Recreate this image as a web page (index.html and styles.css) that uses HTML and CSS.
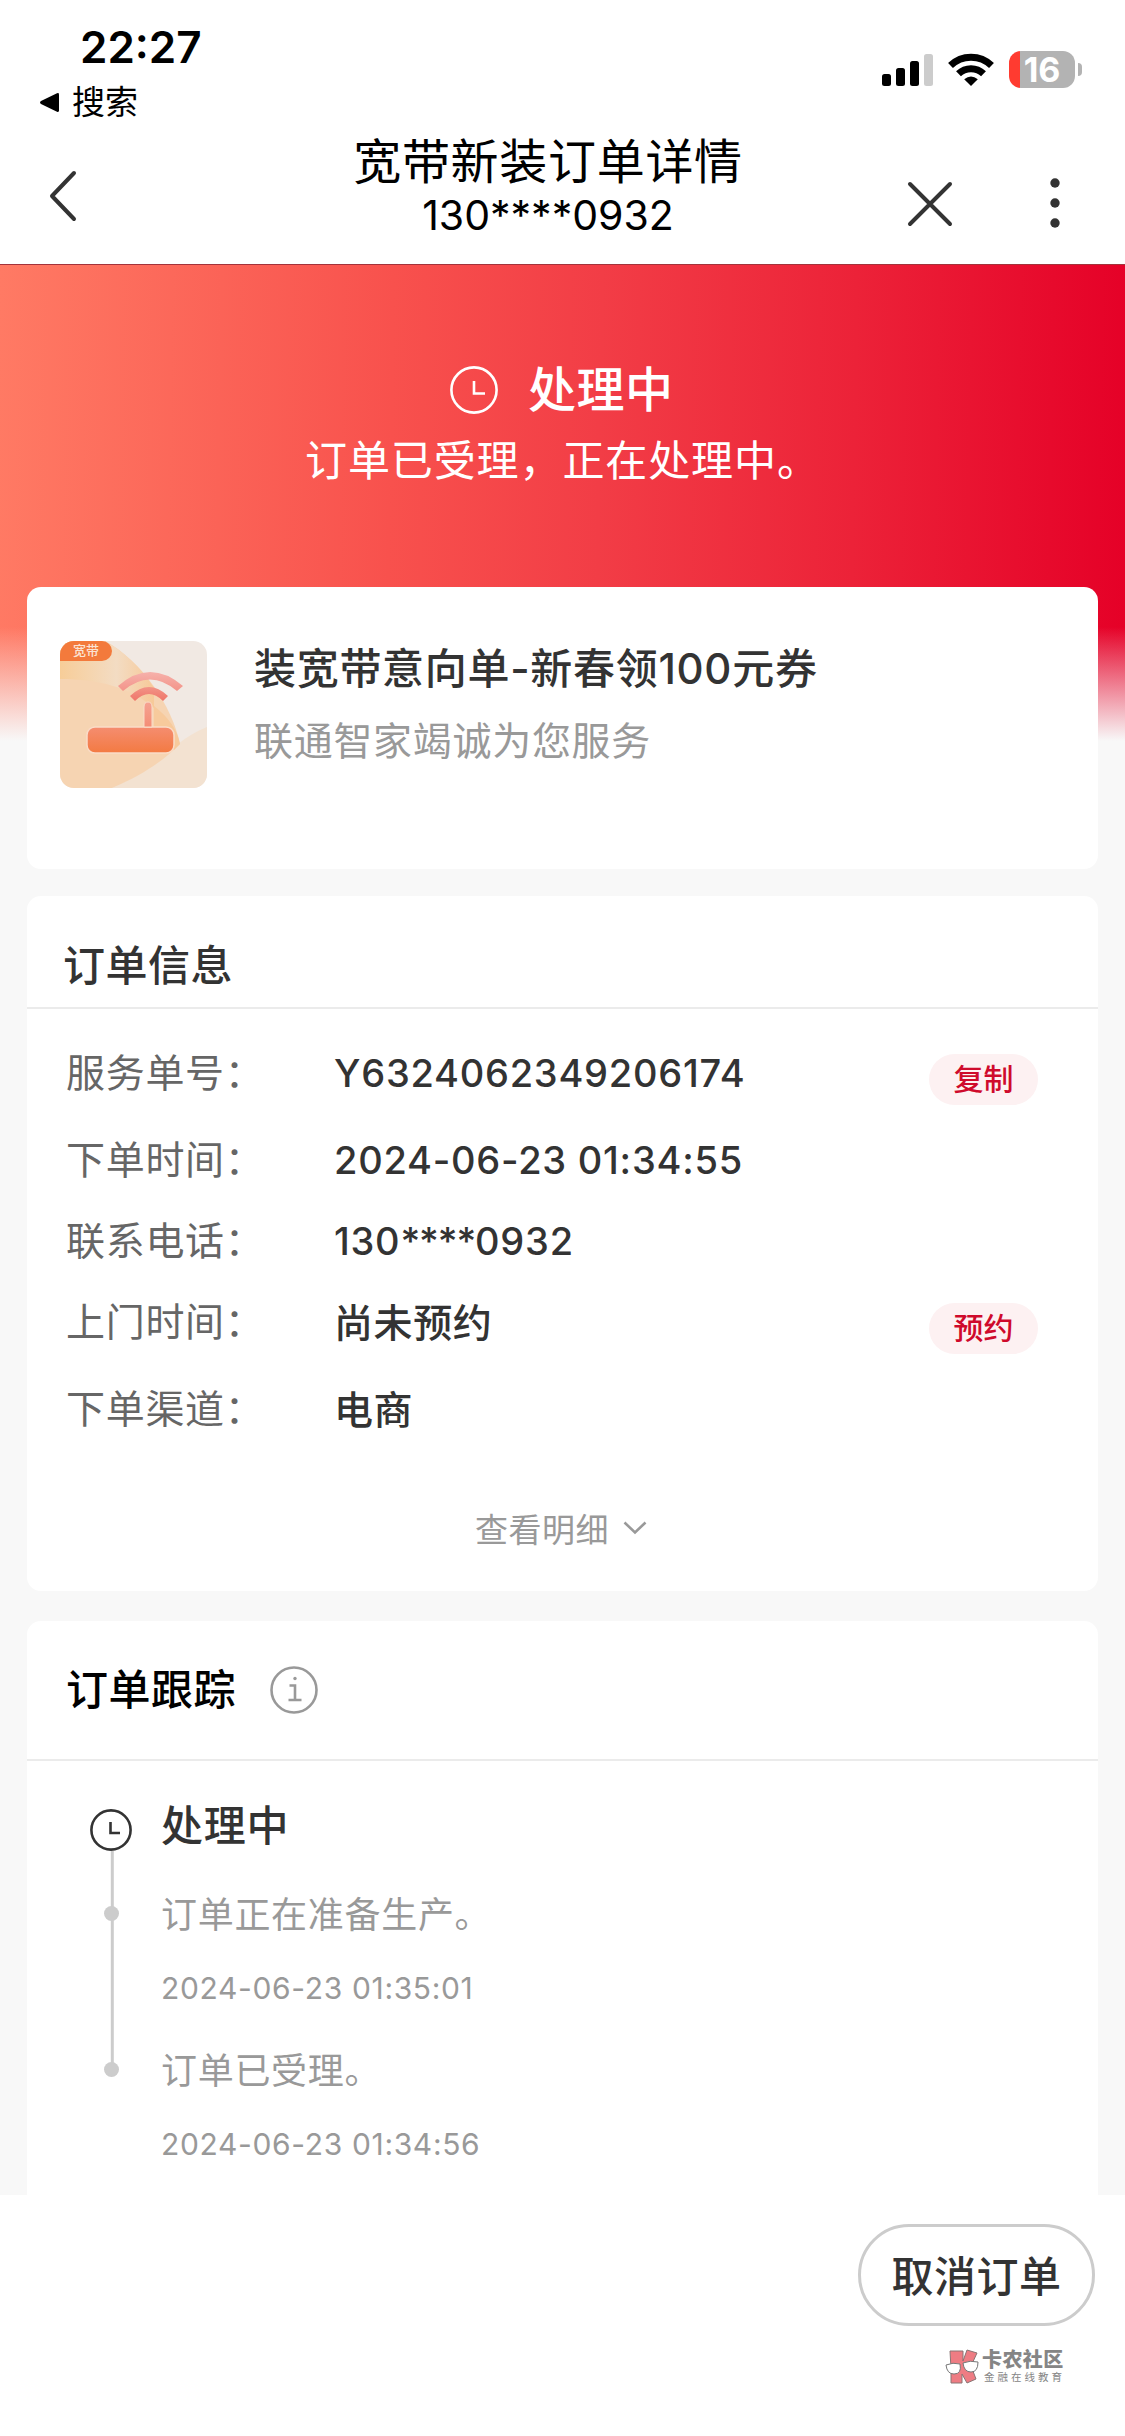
FILE: index.html
```html
<!DOCTYPE html>
<html lang="zh-CN">
<head>
<meta charset="utf-8">
<title>宽带新装订单详情</title>
<link rel="stylesheet" href="styles.css">
</head>
<body>
<header class="top">
  <div class="status">
    <div class="status-left">
      <div class="time">22:27</div>
      <div class="return"><svg width="21" height="21" viewBox="0 0 21 21"><path d="M2 9 18 1.200Q20 .5 20 2.500V18.500Q20 20.500 18 19.800L2 12Q0 10.500 2 9Z"/></svg><span>搜索</span></div>
    </div>
    <div class="status-icons">
      <svg width="51" height="33" viewBox="0 0 51 33"><rect y="21" width="9" height="12" rx="2.500"/><rect x="14" y="15" width="9" height="18" rx="2.500"/><rect x="28" y="8" width="9" height="25" rx="2.500"/><rect x="42" y="1" width="9" height="32" rx="2.500" fill="#ccc"/></svg>
      <svg width="46" height="33" viewBox="0 0 46 33"><g fill="none" stroke="#000" stroke-width="7"><path d="M2.500 12.500A29.500 29.500 0 0 1 43.500 12.500"/><path d="M10.500 20.800A18 18 0 0 1 35.500 20.800"/></g><path d="M16.200 26.300Q23 20.500 29.800 26.300L23 33Z"/></svg>
      <div class="battery"><span class="battery-body">16</span><span class="battery-cap"></span></div>
    </div>
  </div>
  <nav class="nav">
    <svg class="nav-back" width="30" height="54" viewBox="0 0 30 54"><path d="M26 4 4 27 26 50"/></svg>
    <div class="nav-title"><h1>宽带新装订单详情</h1><p>130****0932</p></div>
    <svg class="nav-close" width="48" height="48" viewBox="0 0 48 48"><path d="M4 4 44 44M44 4 4 44"/></svg>
    <svg class="nav-more" width="10" height="50" viewBox="0 0 10 50"><circle cx="5" cy="5" r="4.700"/><circle cx="5" cy="25" r="4.700"/><circle cx="5" cy="45" r="4.700"/></svg>
  </nav>
</header>

<main class="page">
  <section class="hero">
    <div class="hero-state"><svg width="48" height="48" viewBox="0 0 48 48" fill="none" stroke="#fff" stroke-width="2.600"><circle cx="24" cy="24" r="22.600"/><path d="M24 15V27.500H35"/></svg><span>处理中</span></div>
    <p class="hero-text">订单已受理，正在处理中。</p>
  </section>

  <section class="card product">
    <div class="thumb">
      <svg width="147" height="147" viewBox="0 0 147 147">
        <defs>
          <linearGradient id="box" x2="0" y2="1"><stop stop-color="#f58d70"/><stop offset="1" stop-color="#f37a42"/></linearGradient>
          <linearGradient id="pole" x2="0" y2="1"><stop stop-color="#f5a292"/><stop offset="1" stop-color="#f48d75"/></linearGradient>
          <linearGradient id="far" x2="0" y2="1"><stop stop-color="#f6b1ab"/><stop offset="1" stop-color="#f39489"/></linearGradient>
          <linearGradient id="near" x2="0" y2="1"><stop stop-color="#f29487"/><stop offset="1" stop-color="#ef7569"/></linearGradient>
          <linearGradient id="band"><stop stop-color="#f7cd98"/><stop offset=".6" stop-color="#f3dcc3"/><stop offset="1" stop-color="#f7c998"/></linearGradient>
        </defs>
        <rect width="147" height="147" fill="#f1e9e3"/>
        <path d="M147 86C112 100 100 126 52 147H147Z" fill="#f3e2d1"/>
        <path d="M0 0H45C82 20 112 65 120 103C104 119 83 134 52 147H0Z" fill="#f6d4b2"/>
        <path d="M0 0H45C66 12 82 28 94 47V67C70 46 38 38 0 38Z" fill="url(#band)"/>
        <path d="M94 65Q116 82 120 103L114 109V90L94 86Z" fill="#f7ca9c"/>
        <rect x="27" y="86" width="87" height="26" rx="8" fill="url(#box)" stroke="#fadcc8" stroke-width="1.500"/>
        <path d="M84 86V66Q84 61 88 61T92 66V86Z" fill="url(#pole)" stroke="#fadcc8"/>
        <path d="M58 45Q90 17 123 45L117 50Q90 27 63 50Z" fill="url(#far)"/>
        <path d="M70 55Q89 37 108 55L103 60Q89 46 75 60Z" fill="url(#near)"/>
      </svg>
      <span class="thumb-tag">宽带</span>
    </div>
    <div class="product-text"><h2>装宽带意向单-新春领100元券</h2><p>联通智家竭诚为您服务</p></div>
  </section>

  <section class="card info">
    <h2 class="info-title">订单信息</h2>
    <dl class="rows">
      <div class="row row-tall"><dt>服务单号：</dt><dd>Y6324062349206174</dd><button class="pill">复制</button></div>
      <div class="row"><dt>下单时间：</dt><dd>2024-06-23 01:34:55</dd></div>
      <div class="row"><dt>联系电话：</dt><dd>130<span class="mask">****</span>0932</dd></div>
      <div class="row row-tall"><dt>上门时间：</dt><dd class="cn">尚未预约</dd><button class="pill">预约</button></div>
      <div class="row"><dt>下单渠道：</dt><dd class="cn">电商</dd></div>
    </dl>
    <div class="more"><span>查看明细</span><svg width="24" height="14" viewBox="0 0 24 14"><path d="M1.500 1.500 12 11.500 22.500 1.500"/></svg></div>
  </section>

  <section class="card track">
    <div class="track-head"><h2>订单跟踪</h2><svg width="48" height="48" viewBox="0 0 48 48" fill="none" stroke="#999" stroke-width="2.600"><circle cx="24" cy="24" r="22.500"/><path d="M19.500 19.500H25V34M18.500 34H31.500"/><circle cx="25" cy="12.500" r="1.700" fill="#999" stroke="none"/></svg></div>
    <div class="timeline">
      <svg class="rail" width="42" height="270" viewBox="0 0 42 270"><path d="M22.300 42V260" stroke="#ccc" stroke-width="3"/><circle cx="21.500" cy="104.500" r="7.500" fill="#ccc"/><circle cx="21.500" cy="260.500" r="7.500" fill="#ccc"/><g fill="none" stroke="#333" stroke-width="2.600"><circle cx="21" cy="21" r="19.600"/><path d="M20.500 13V24H30"/></g></svg>
      <div class="events">
        <h3>处理中</h3>
        <div class="event"><p>订单正在准备生产。</p><time>2024-06-23 01:35:01</time></div>
        <div class="event"><p>订单已受理。</p><time>2024-06-23 01:34:56</time></div>
      </div>
    </div>
  </section>
</main>

<footer class="footer">
  <button class="cancel">取消订单</button>
  <div class="brand">
    <svg width="34" height="36" viewBox="0 0 34 36"><path d="M5 2H18V12L22 1 32 4 26 17 31 30 22 34 17 25V34H6V20Z" fill="#ee7c83" stroke="#8a7474"/><g fill="#fff" stroke="#777"><path d="M1 16Q8 13 15 15 17 25 9 25 2 25 1 16Z"/><path d="M18 14Q25 11 33 13 33 23 26 23 19 23 18 14Z"/></g></svg>
    <div><b>卡农社区</b><i>金融在线教育</i></div>
  </div>
</footer>
</body>
</html>
```
FILE: styles.css
```css
* { box-sizing: border-box; margin: 0; padding: 0; }
body {
  width: 1125px;
  height: 2436px;
  display: flex;
  flex-direction: column;
  overflow: hidden;
  background: #fff;
  color: #333;
  font-family: Inter, "Noto Sans CJK SC", sans-serif;
}
svg { display: block; flex: none; }
h1, h2, h3 { font-weight: 500; }
button { font: inherit; }

.top { height: 264px; flex: none; color: #000; }
.status { height: 128px; display: flex; justify-content: space-between; padding: 20px 43px 0 39px; }
.time { margin-left: 41px; font-size: 44px; font-weight: 600; line-height: 54px; }
.return { display: flex; align-items: center; gap: 12px; height: 48px; margin-top: 4px; font-size: 33px; line-height: 48px; }
.status-icons { display: flex; align-items: center; height: 36px; margin-top: 31px; gap: 15px; }
.battery { display: flex; align-items: center; gap: 3px; }
.battery-body {
  width: 66px; height: 37px; border-radius: 12px; text-align: center;
  background: linear-gradient(90deg, #ff3b30 11px, #b3b3b3 11px);
  color: #fff; font-size: 34px; font-weight: 700; line-height: 37px;
}
.battery-cap { width: 4px; height: 13px; border-radius: 0 7px 7px 0; background: #b3b3b3; }

.nav { height: 136px; display: flex; align-items: flex-start; padding-left: 48px; }
.nav path { fill: none; stroke: #333; stroke-width: 4; stroke-linecap: round; stroke-linejoin: round; }
.nav circle { fill: #333; }
.nav-back { margin-top: 41px; }
.nav-title { width: 400px; margin-left: 270px; text-align: center; }
.nav-title h1 { font-size: 48px; font-weight: 400; letter-spacing: .7px; line-height: 60px; margin-top: 4px; }
.nav-title p { font-size: 41px; line-height: 48px; margin-top: -1px; }
.nav-close { margin: 52px 0 0 158px; }
.nav-more { margin: 50px 0 0 96px; }

.page {
  height: 1931px; flex: none; padding: 0 27px; overflow: hidden;
  border-top: 1px solid #a3333b;
  background:
    linear-gradient(180deg, rgba(248,248,248,0) 362px, #f8f8f8 476px),
    linear-gradient(91deg, #ff7a64 0%, #f8514d 34%, #f23d46 52%, #ec2238 74%, #e50027 98%);
}
.hero { height: 322px; padding-top: 94px; color: #fff; }
.hero-state { display: flex; align-items: center; height: 62px; padding-left: 423px; gap: 30px; font-size: 48px; font-weight: 500; letter-spacing: .5px; line-height: 62px; }
.hero-text { padding-left: 278px; font-size: 42px; letter-spacing: .9px; line-height: 60px; margin-top: 10px; }

.card { background: #fff; border-radius: 14px; }
.product { height: 282px; display: flex; padding: 54px 33px; gap: 47px; }
.thumb { position: relative; width: 147px; height: 147px; border-radius: 14px; overflow: hidden; }
.thumb-tag { position: absolute; left: 0; top: 0; width: 52px; height: 20px; border-radius: 0 10px 10px 0; background: #f37a3c; color: #fbe3d3; font-size: 13px; font-weight: 500; line-height: 19px; text-align: center; }
.product-text h2 { font-size: 42px; letter-spacing: .7px; line-height: 60px; margin-top: -2px; }
.product-text p { font-size: 39px; letter-spacing: .7px; line-height: 56px; margin-top: 14px; }
.product-text p { color: #999; }

.info { height: 695px; margin-top: 27px; }
.info-title { height: 113px; padding: 40px 36px 0; border-bottom: 2px solid #ebebeb; font-size: 42px; line-height: 60px; letter-spacing: .5px; }
.rows { height: 485px; padding: 23px 60px 0 39px; }
.row { display: grid; grid-template-columns: 268px 1fr 109px; align-items: start; height: 81px; font-size: 38px; line-height: 81px; }
.row-tall { height: 87px; }
.row dt { color: #666; font-size: 39px; letter-spacing: .7px; }
.row dd { padding-top: 1px; font-weight: 500; letter-spacing: .75px; }
.row .cn { font-size: 39px; letter-spacing: .6px; }
.mask { letter-spacing: -1.1px; }
.pill { height: 51px; margin-top: 22px; border: 0; border-radius: 26px; background: #fdf1f2; color: #cf0a2c; font-size: 30px; font-weight: 500; line-height: 51px; }
.more { display: flex; justify-content: center; align-items: center; gap: 14px; height: 68px; padding-right: 3px; font-size: 33px; letter-spacing: .5px; color: #999; }
.more path { fill: none; stroke: #999; stroke-width: 2.6; }

.track { height: 620px; margin-top: 30px; }
.track-head { display: flex; align-items: center; gap: 34px; height: 140px; padding: 0 39px; border-bottom: 2px solid #ebebeb; color: #000; }
.track-head h2 { font-size: 42px; letter-spacing: .5px; line-height: 60px; }
.timeline { display: flex; gap: 29px; padding: 48px 63px 0; }
.events { color: #999; }
.events h3 { color: #333; font-size: 42px; letter-spacing: .7px; line-height: 60px; margin-top: -13px; }
.event { height: 156px; }
.event:first-of-type { margin-top: 34px; }
.event p { font-size: 36px; letter-spacing: .7px; line-height: 50px; }
.event time { display: block; font-size: 30px; letter-spacing: .65px; line-height: 40px; margin-top: 28px; }

.footer { flex: 1; padding: 29px 30px 0 0; display: flex; flex-direction: column; align-items: flex-end; }
.cancel { width: 237px; height: 102px; padding-bottom: 3px; border: 3px solid #ccc; border-radius: 51px; background: #fff; color: #333; font-size: 42px; font-weight: 500; letter-spacing: .5px; }
.brand { display: flex; gap: 3px; margin: 23px 32px 0 0; color: #858585; }
.brand div { width: 81px; }
.brand b, .brand i { display: block; font-style: normal; white-space: nowrap; }
.brand b { font-size: 20px; font-weight: 900; line-height: 22px; letter-spacing: .4px; }
.brand i { font-size: 10.500px; line-height: 14px; letter-spacing: 3px; padding-left: 2px; }
```
